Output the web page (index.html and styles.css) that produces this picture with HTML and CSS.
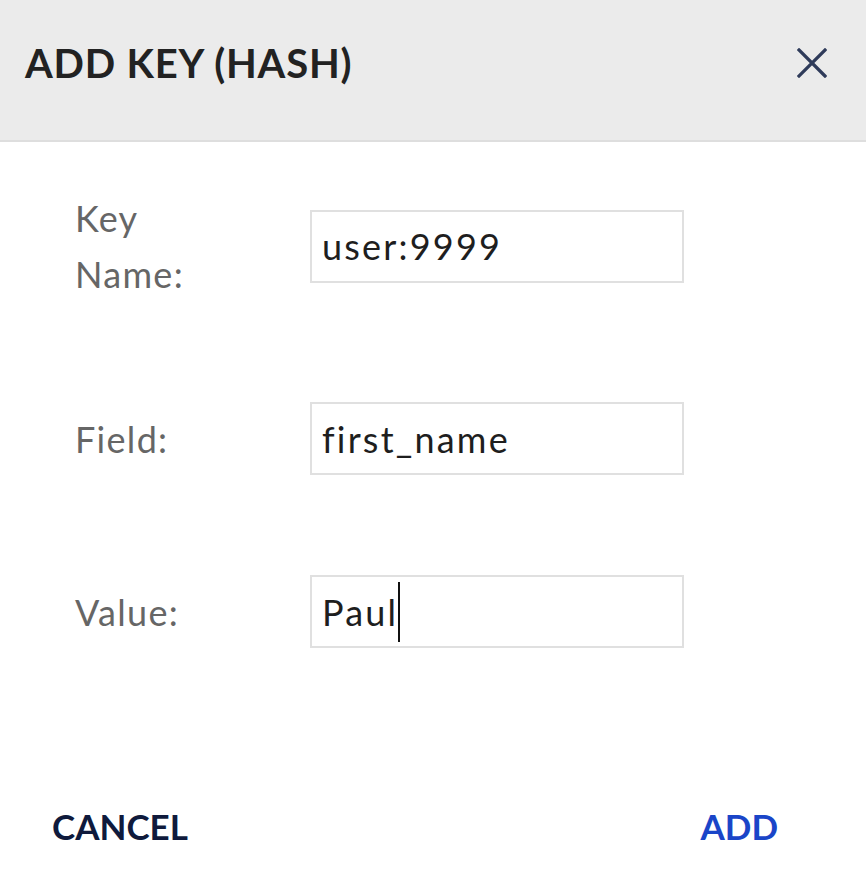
FILE: index.html
```html
<!DOCTYPE html>
<html>
<head>
<meta charset="utf-8">
<link rel="stylesheet" href="styles.css">
</head>
<body>
<div class="dialog">
  <div class="header">
    <h1 class="title">ADD KEY (HASH)</h1>
    <button class="close" aria-label="Close">
      <svg width="30" height="30" viewBox="0 0 30 30"><path d="M2 2 L28 28 M28 2 L2 28" stroke="#2f3b5a" stroke-width="3.2" stroke-linecap="square"/></svg>
    </button>
  </div>
  <div class="form">
    <label class="label">Key Name:</label>
    <div class="input">user:9999</div>
    <label class="label">Field:</label>
    <div class="input">first_name</div>
    <label class="label">Value:</label>
    <div class="input">Paul<span class="caret"></span></div>
  </div>
  <div class="footer">
    <button class="btn cancel">CANCEL</button>
    <button class="btn add">ADD</button>
  </div>
</div>
</body>
</html>
```
FILE: styles.css
```css
html, body {
  margin: 0;
  padding: 0;
  background: #ffffff;
  font-family: Lato, "Open Sans", sans-serif;
}
.dialog {
  width: 866px;
}
.header {
  height: 142px;
  background: #ebebeb;
  border-bottom: 2px solid #dedede;
  display: flex;
  align-items: center;
  justify-content: space-between;
  padding: 0 39px 14px 25px;
  box-sizing: border-box;
}
.title {
  margin: 0;
  font-size: 40px;
  font-weight: 700;
  color: #222222;
  letter-spacing: 0.8px;
}
.close {
  border: 0;
  background: none;
  padding: 0;
  width: 30px;
  height: 30px;
  display: flex;
}
.form {
  display: grid;
  grid-template-columns: 235px 374px;
  row-gap: 100px;
  align-items: center;
  padding: 48px 0 0 75px;
}
.label {
  font-size: 36px;
  line-height: 56px;
  letter-spacing: 1.3px;
  color: #666666;
  width: 160px;
}
.input {
  height: 73px;
  box-sizing: border-box;
  border: 2px solid #e0e0e0;
  padding: 0 10px;
  display: flex;
  align-items: center;
  font-size: 36px;
  letter-spacing: 2.2px;
  color: #1e1e1e;
}
.caret {
  display: inline-block;
  width: 2px;
  height: 60px;
  background: #111;
  margin-left: 0;
}
.footer {
  display: flex;
  justify-content: space-between;
  padding: 0 88px 0 52px;
  margin-top: 158px;
}
.btn {
  border: 0;
  background: none;
  padding: 0;
  font-family: Lato, "Open Sans", sans-serif;
  font-weight: 700;
  font-size: 35px;
  line-height: 40px;
}
.cancel { color: #0f1a3c; }
.add { color: #1a45c8; }
```
